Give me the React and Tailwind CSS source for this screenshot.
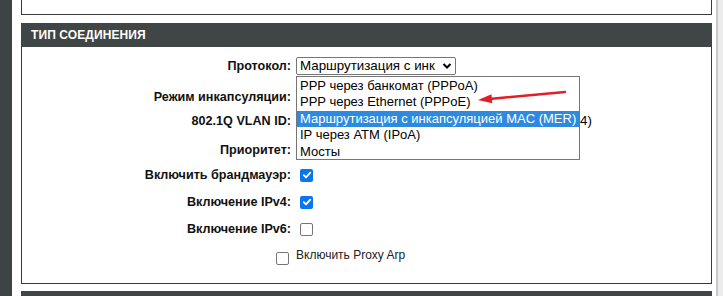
import React from 'react'

const options = [
  'PPP через банкомат (PPPoA)',
  'PPP через Ethernet (PPPoE)',
  'Маршрутизация с инкапсуляцией MAC (MER)',
  'IP через ATM (IPoA)',
  'Мосты',
]

function Check({ checked }) {
  if (checked) {
    return (
      <span className="ml-[4px] w-[13px] h-[13px] rounded-[2px] bg-[#0a75f0] flex items-center justify-center">
        <svg width="10" height="10" viewBox="0 0 10 10">
          <path d="M1.8 5.2 L4 7.4 L8.3 2.6" stroke="white" strokeWidth="1.8" fill="none" strokeLinecap="round" strokeLinejoin="round" />
        </svg>
      </span>
    )
  }
  return <span className="ml-[4px] w-[13px] h-[13px] rounded-[2px] border border-[#767676] bg-white" />
}

function Row({ label, className, children }) {
  return (
    <div className={'flex items-center h-[20px] ' + (className || '')}>
      <div className="w-[269px] text-right font-bold text-[12.6px] text-[#111]">{label}</div>
      <div className="ml-[5px] flex items-center">{children}</div>
    </div>
  )
}

export default function App() {
  return (
    <div className="w-[723px] h-[296px] overflow-hidden bg-white flex font-['Liberation_Sans',Arial,sans-serif]">
      {/* left strip */}
      <div className="w-[12px] bg-[#3e4345]" />

      <div className="w-[704px] pl-[9px] pr-[4px]">
        {/* previous panel tail */}
        <div className="h-[15px] border-l border-r border-b border-[#3a3a3a]" />

        {/* Header */}
        <div className="mt-[8px] h-[24px] bg-[#404545] flex items-center pl-[10px]">
          <span className="text-white font-bold text-[12px] tracking-[0.1px]">ТИП СОЕДИНЕНИЯ</span>
        </div>

        {/* Section */}
        <div className="relative h-[237px] border-l border-r border-b border-[#3a3a3a] pt-[9px]">
          <Row label="Протокол:">
            <div className="w-[160px] h-[18px] border border-[#767676] rounded-[2px] flex items-center pl-[3px] pr-[3px] text-[13.33px] text-black bg-white">
              <span className="flex-1 overflow-hidden whitespace-nowrap">Маршрутизация с инк</span>
              <svg width="10" height="8" viewBox="0 0 10 8" className="ml-[2px]">
                <path d="M1.5 2 L5 5.5 L8.5 2" stroke="black" strokeWidth="2" fill="none" />
              </svg>
            </div>
          </Row>
          <Row label="Режим инкапсуляции:" className="mt-[11px]">
            <div className="w-[90px] h-[18px] border border-[#767676]" />
          </Row>
          <Row label="802.1Q VLAN ID:" className="mt-[4px]">
            <div className="w-[244px] h-[18px] border border-[#767676]" />
            {/* only the tail of the hint shows past the open list */}
            <span className="ml-[40px] text-[13.33px] text-black">4)</span>
          </Row>
          <Row label="Приоритет:" className="mt-[9px]">
            <div className="w-[60px] h-[18px] border border-[#767676]" />
          </Row>
          <Row label="Включить брандмауэр:" className="mt-[5px]">
            <Check checked />
          </Row>
          <Row label="Включение IPv4:" className="mt-[7px]">
            <Check checked />
          </Row>
          <Row label="Включение IPv6:" className="mt-[7px]">
            <Check />
          </Row>
          <div className="mt-[6px] h-[20px] flex items-center pl-[254px]">
            <span className="w-[13px] h-[13px] rounded-[2px] border border-[#767676] bg-white mt-[6px]" />
            <span className="ml-[7px] text-[12px] text-[#222]">Включить Proxy Arp</span>
          </div>

          {/* open dropdown list */}
          <div className="absolute left-[274px] top-[29px] w-[284px] h-[84px] overflow-hidden border border-[#767676] bg-white py-[1px] text-[13px] text-black">
            {options.map((o, i) => (
              <div
                key={i}
                className={
                  'h-[16.4px] leading-[16px] pl-[3px] whitespace-nowrap ' +
                  (i === 2 ? 'bg-[#2d8ae0] text-white' : '')
                }
              >
                {o}
              </div>
            ))}
          </div>

          {/* red arrow */}
          <svg className="absolute left-[450px] top-[38px]" width="120" height="22" viewBox="0 0 120 22">
            <path d="M93 7 L19.9 13.7" stroke="#e31e24" strokeWidth="2.5" strokeLinecap="round" />
            <path d="M6 15 L20.3 18.2 L19.5 9.2 Z" fill="#e31e24" />
          </svg>
        </div>

        {/* next header */}
        <div className="mt-[7px] h-[20px] bg-[#404545]" />
      </div>

      {/* right scroll strip */}
      <div className="w-[7px] border-l-2 border-[#c9c9c9] bg-[#ececec]" />
    </div>
  )
}
